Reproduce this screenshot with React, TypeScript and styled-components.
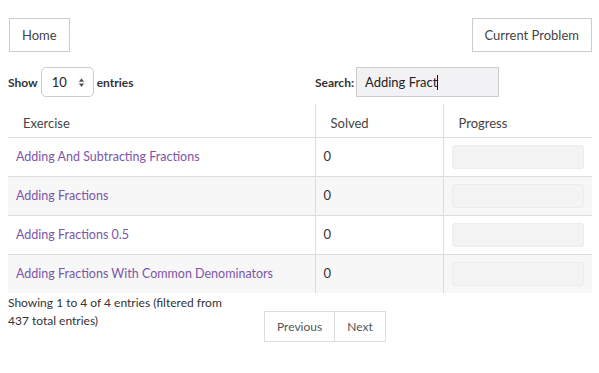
import React from "react";
import styled, { createGlobalStyle } from "styled-components";

type Row = { name: string; solved: number };

const rows: Row[] = [
  { name: "Adding And Subtracting Fractions", solved: 0 },
  { name: "Adding Fractions", solved: 0 },
  { name: "Adding Fractions 0.5", solved: 0 },
  { name: "Adding Fractions With Common Denominators", solved: 0 },
];

const GlobalStyle = createGlobalStyle`
  * { box-sizing: border-box; }
  body {
    margin: 0;
    background: #ffffff;
    font-family: Lato, "Open Sans", sans-serif;
    font-size: 13px;
    color: #333333;
  }
`;

export default function App() {
  return (
    <>
      <GlobalStyle />
      <Page>
        <TopBar>
          <NavButton>Home</NavButton>
          <NavButton>Current Problem</NavButton>
        </TopBar>

        <Controls>
          <Length>
            Show
            <SelectBox>
              10
              <Spinner viewBox="0 0 8 12">
                <path d="M4 1 L7 5 L1 5 Z" fill="#555" />
                <path d="M4 11 L7 7 L1 7 Z" fill="#555" />
              </Spinner>
            </SelectBox>
            entries
          </Length>
          <Filter>
            Search:
            <SearchInput>
              Adding Fract<Caret />
            </SearchInput>
          </Filter>
        </Controls>

        <Table>
          <thead>
            <tr>
              <HeadCell>Exercise</HeadCell>
              <HeadCell $divider>Solved</HeadCell>
              <HeadCell $divider>Progress</HeadCell>
            </tr>
          </thead>
          <tbody>
            {rows.map((row, i) => (
              <BodyRow key={row.name} $shaded={i % 2 === 1}>
                <Cell>
                  <ExerciseLink>{row.name}</ExerciseLink>
                </Cell>
                <Cell $divider>{row.solved}</Cell>
                <Cell $divider>
                  <ProgressBar />
                </Cell>
              </BodyRow>
            ))}
          </tbody>
        </Table>

        <Footer>
          <Info>Showing 1 to 4 of 4 entries (filtered from 437 total entries)</Info>
          <Pagination>
            <PageButton>Previous</PageButton>
            <PageButton $last>Next</PageButton>
          </Pagination>
        </Footer>
      </Page>
    </>
  );
}

const Page = styled.div`
  width: 599px;
  padding: 18px 7px 0 8px;
`;

const TopBar = styled.div`
  display: flex;
  justify-content: space-between;
  padding: 0 0 0 1px;
`;

const NavButton = styled.div`
  height: 34px;
  padding: 0 12px;
  display: flex;
  align-items: center;
  border: 1px solid #cccccc;
  color: #444444;
  font-size: 13px;
`;

const Controls = styled.div`
  display: grid;
  grid-template-columns: 307px 1fr;
  margin-top: 15px;
  height: 30px;
  align-items: center;
`;

const Length = styled.div`
  display: flex;
  align-items: center;
  gap: 3px;
  font-size: 12px;
  font-weight: 700;
  color: #333333;
`;

const SelectBox = styled.div`
  width: 53px;
  height: 30px;
  border: 1px solid #cccccc;
  border-radius: 5px;
  display: flex;
  align-items: center;
  justify-content: space-between;
  padding: 0 8px 0 10px;
  font-weight: 400;
  font-size: 13px;
  color: #222222;
`;

const Spinner = styled.svg`
  width: 7px;
  height: 11px;
`;

const Filter = styled.div`
  display: flex;
  align-items: center;
  gap: 2px;
  font-size: 12px;
  font-weight: 700;
`;

const SearchInput = styled.div`
  width: 143px;
  height: 30px;
  border: 1px solid #cccccc;
  background: #f2f2f4;
  display: flex;
  align-items: center;
  padding: 0 8px;
  font-weight: 400;
  font-size: 13px;
  color: #222222;
`;

const Caret = styled.span`
  display: inline-block;
  width: 1px;
  height: 15px;
  background: #111111;
`;

const Table = styled.table`
  width: 584px;
  margin-top: 7px;
  border-collapse: collapse;
`;

const HeadCell = styled.th<{ $divider?: boolean }>`
  height: 33px;
  padding: 0 15px 6px;
  vertical-align: bottom;
  text-align: left;
  font-weight: 400;
  font-size: 13px;
  color: #444444;
  border-bottom: 1px solid #dddddd;
  border-left: ${(p) => (p.$divider ? "1px solid #dddddd" : "none")};
  &:nth-child(1) { width: 307px; }
  &:nth-child(2) { width: 128px; }
`;

const BodyRow = styled.tr<{ $shaded: boolean }>`
  background: ${(p) => (p.$shaded ? "#f7f7f7" : "#ffffff")};
  &:not(:first-child) > td {
    border-top: 1px solid #dddddd;
  }
`;

const Cell = styled.td<{ $divider?: boolean }>`
  height: 39px;
  padding: 0 8px 2px;
  font-size: 13px;
  color: #333333;
  border-left: ${(p) => (p.$divider ? "1px solid #dddddd" : "none")};
`;

const ExerciseLink = styled.span`
  color: #7b56a8;
  font-size: 12.5px;
`;

const ProgressBar = styled.div`
  width: 132px;
  height: 24px;
  margin-top: 2px;
  border-radius: 3px;
  background: #f3f3f3;
  border: 1px solid #ececec;
`;

const Footer = styled.div`
  display: flex;
  align-items: flex-start;
`;

const Info = styled.div`
  width: 230px;
  padding-top: 1px;
  font-size: 12px;
  line-height: 18px;
  color: #333333;
`;

const Pagination = styled.div`
  display: flex;
  margin: 18px 0 0 26px;
`;

const PageButton = styled.div<{ $last?: boolean }>`
  height: 31px;
  display: flex;
  align-items: center;
  padding: 0 12px;
  border: 1px solid #dddddd;
  border-left: ${(p) => (p.$last ? "none" : "1px solid #dddddd")};
  font-size: 12px;
  color: #555555;
`;
